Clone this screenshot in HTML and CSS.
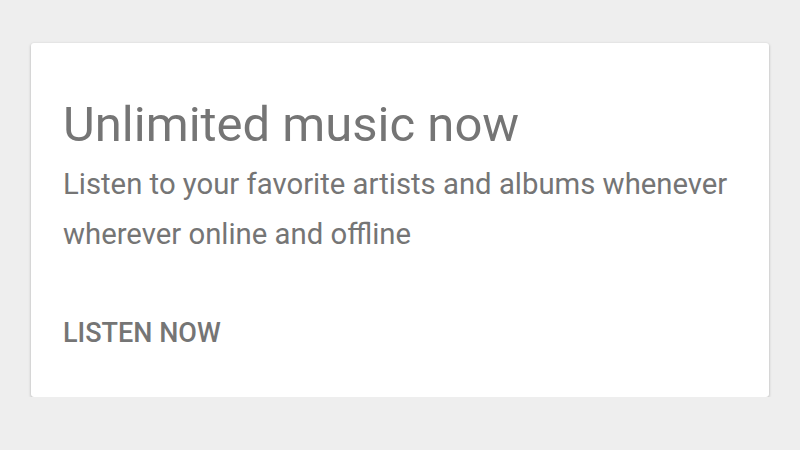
FILE: index.html
```html
<!DOCTYPE html>
<html>
<head>
<meta charset="utf-8">
<link rel="stylesheet" href="styles.css">
</head>
<body>
<div class="page">
  <div class="card">
    <h1 class="title">Unlimited music now</h1>
    <p class="text">Listen to your favorite artists and albums whenever wherever online and offline</p>
    <div class="action">LISTEN NOW</div>
  </div>
</div>
</body>
</html>
```
FILE: styles.css
```css
html, body {
  margin: 0;
  padding: 0;
  background: #eeeeee;
  font-family: Roboto, "Noto Sans", sans-serif;
}
.page {
  padding: 43px 31px 0 31px;
}
.card {
  background: #ffffff;
  border-radius: 3px;
  box-shadow: 0 1px 3px rgba(0,0,0,0.28);
  height: 354px;
  box-sizing: border-box;
  padding: 50px 32px 0 32px;
}
.title {
  margin: 0;
  font-size: 49px;
  font-weight: 400;
  line-height: 64px;
  color: #757575;
}
.text {
  margin: 2px 0 0 0;
  font-size: 29.3px;
  line-height: 50px;
  color: #757575;
}
.action {
  margin-top: 56px;
  font-size: 27px;
  line-height: 36px;
  font-weight: 500;
  color: #757575;
}
```
